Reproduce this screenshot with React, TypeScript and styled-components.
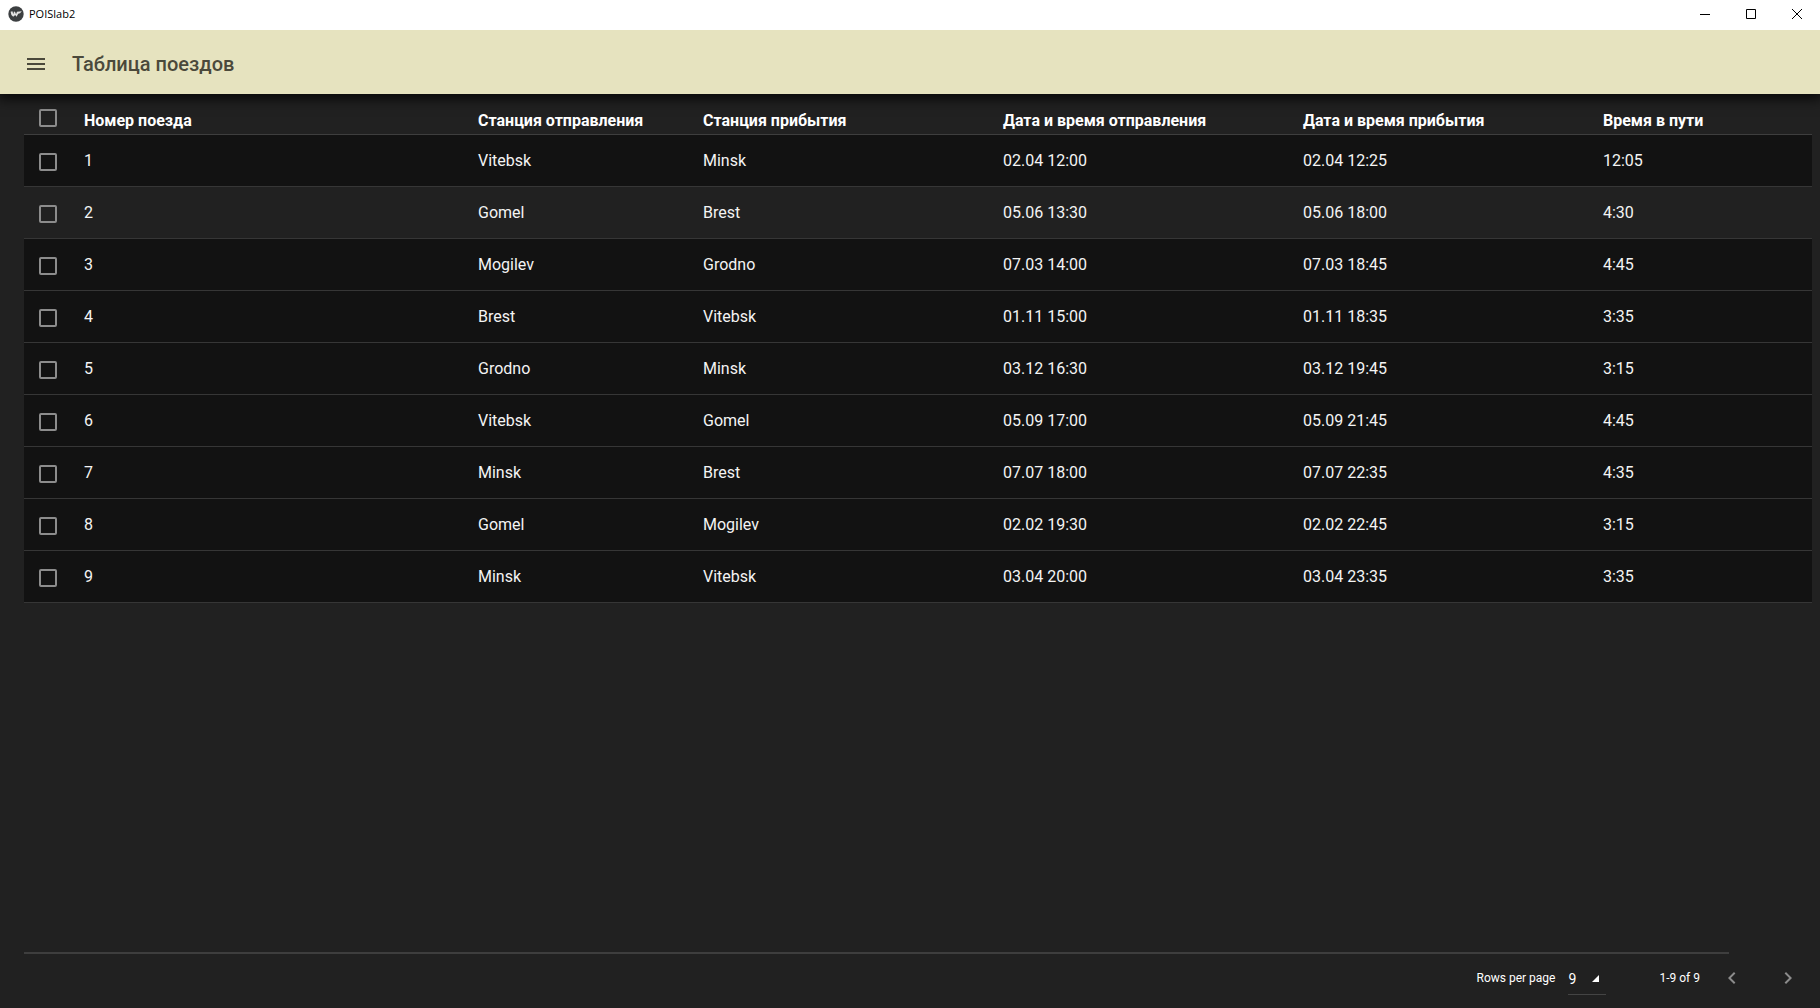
import React, { useState } from "react";
import styled, { createGlobalStyle } from "styled-components";

const GlobalStyle = createGlobalStyle`
  * { box-sizing: border-box; }
  body { margin: 0; background: #212121; }
  button, select, input { font: inherit; margin: 0; }
`;

const Window = styled.div`
  min-height: 100vh;
  display: flex;
  flex-direction: column;
  background: #212121;
  color: #fff;
  font-family: Roboto, "Liberation Sans", sans-serif;
  font-size: 16px;
`;

const TitleBar = styled.header`
  position: relative;
  z-index: 1;
  display: flex;
  align-items: center;
  height: 30px;
  padding: 0 0 2px 8px;
  background: #fff;
  color: #000;
`;

const WindowTitle = styled.span`
  flex: 1;
  margin-left: 5px;
  font-family: "Open Sans", "Noto Sans", sans-serif;
  font-size: 11px;
  line-height: 16px;
`;

const WindowButton = styled.button`
  display: flex;
  align-items: center;
  justify-content: center;
  width: 46px;
  height: 28px;
  padding: 0;
  border: 0;
  background: transparent;
  color: #000;
`;

const Toolbar = styled.div`
  position: relative;
  display: flex;
  align-items: center;
  gap: 24px;
  height: 64px;
  padding: 4px 24px 0;
  background: #e6e3bf;
  color: #4b493b;
  box-shadow: 0 3px 12px 2px rgba(0, 0, 0, 0.75);
`;

const IconButton = styled.button`
  display: flex;
  padding: 0;
  border: 0;
  background: transparent;
  color: inherit;
`;

const PageTitle = styled.h1`
  margin: 0;
  font-size: 20px;
  line-height: 24px;
  font-weight: 500;
`;

const Main = styled.main`
  flex: 1;
  padding: 0 8px 0 24px;
`;

const Table = styled.table`
  width: 100%;
  table-layout: fixed;
  border-collapse: separate;
  border-spacing: 0;
`;

const Col = styled.col<{ $width?: number }>`
  width: ${(p) => (p.$width ? `${p.$width}px` : "auto")};
`;

const HeadCell = styled.th`
  height: 41px;
  padding: 14px 0 0;
  border-bottom: 1px solid #3e3e3e;
  font-weight: 700;
  line-height: 20px;
  text-align: left;
`;

const HeadCheckCell = styled(HeadCell)`
  padding: 7px 0 0 15px;
`;

const Row = styled.tr<{ $highlighted: boolean }>`
  background: ${(p) => (p.$highlighted ? "#212121" : "#121212")};
`;

const Cell = styled.td`
  height: 52px;
  padding: 0;
  border-bottom: 1px solid #363636;
  color: #f4f4f4;
  line-height: 20px;
`;

const CheckCell = styled(Cell)`
  padding: 3px 0 0 15px;
`;

const Checkbox = styled.input.attrs({ type: "checkbox" })`
  appearance: none;
  display: block;
  width: 18px;
  height: 18px;
  border: 2px solid #8c8c8c;
  border-radius: 2px;
  &:checked { background: #e6e3bf; }
`;

const Footer = styled.footer`
  padding-left: 24px;
`;

const Rule = styled.hr`
  height: 2px;
  margin: 0 91px 0 0;
  border: 0;
  background: #3e3e3e;
`;

const Pagination = styled.div`
  display: flex;
  align-items: center;
  justify-content: flex-end;
  height: 54px;
  padding: 0 20px 6px 0;
  font-size: 12px;
  color: #fff;
`;

const SelectBox = styled.div`
  position: relative;
  margin: 2px 53px 0 13px;
`;

const PageSelect = styled.select`
  appearance: none;
  display: block;
  width: 38px;
  height: 32px;
  padding: 0;
  border: 0;
  border-bottom: 1px solid #444;
  border-radius: 0;
  background: transparent;
  color: #fff;
  font-size: 14px;
`;

const SelectArrow = styled.svg`
  position: absolute;
  right: 7px;
  top: 12px;
  pointer-events: none;
`;

const PageButtons = styled.div`
  display: flex;
  gap: 32px;
  margin-left: 20px;
  color: #8c8c8c;
`;

const headings = [
  "Номер поезда",
  "Станция отправления",
  "Станция прибытия",
  "Дата и время отправления",
  "Дата и время прибытия",
  "Время в пути",
];

const trains = [
  ["1", "Vitebsk", "Minsk", "02.04 12:00", "02.04 12:25", "12:05"],
  ["2", "Gomel", "Brest", "05.06 13:30", "05.06 18:00", "4:30"],
  ["3", "Mogilev", "Grodno", "07.03 14:00", "07.03 18:45", "4:45"],
  ["4", "Brest", "Vitebsk", "01.11 15:00", "01.11 18:35", "3:35"],
  ["5", "Grodno", "Minsk", "03.12 16:30", "03.12 19:45", "3:15"],
  ["6", "Vitebsk", "Gomel", "05.09 17:00", "05.09 21:45", "4:45"],
  ["7", "Minsk", "Brest", "07.07 18:00", "07.07 22:35", "4:35"],
  ["8", "Gomel", "Mogilev", "02.02 19:30", "02.02 22:45", "3:15"],
  ["9", "Minsk", "Vitebsk", "03.04 20:00", "03.04 23:35", "3:35"],
];

const Icon = ({ d }: { d: string }) => (
  <svg width="24" height="24" viewBox="0 0 24 24" fill="currentColor" aria-hidden="true">
    <path d={d} />
  </svg>
);

const Glyph = ({ d }: { d: string }) => (
  <svg width="10" height="10" viewBox="0 0 10 10" fill="none" stroke="currentColor" aria-hidden="true">
    <path d={d} />
  </svg>
);

const Logo = () => (
  <svg width="16" height="16" viewBox="0 0 16 16" aria-hidden="true">
    <circle cx="8" cy="8" r="7.7" fill="#3c3f41" />
    <path d="M2.6 5.8 4.4 5.2 5.4 8.2 6 5.2 7.4 6.6 8 8.2 9 5.8 13.8 5.2 12 7.2 10.2 7.8 8.6 10.8 7.2 9 5.2 10.8 3.4 9Z" fill="#e4e4e4" />
  </svg>
);

export default function App() {
  const [selected, setSelected] = useState<string[]>([]);
  const [highlighted, setHighlighted] = useState("2");

  const toggle = (id: string) =>
    setSelected((ids) => (ids.includes(id) ? ids.filter((i) => i !== id) : [...ids, id]));

  return (
    <Window>
      <GlobalStyle />
      <TitleBar>
        <Logo />
        <WindowTitle>POISlab2</WindowTitle>
        <WindowButton aria-label="Minimize"><Glyph d="M0 5.5H10" /></WindowButton>
        <WindowButton aria-label="Maximize"><Glyph d="M.5 .5H9.5V9.5H.5Z" /></WindowButton>
        <WindowButton aria-label="Close"><Glyph d="M0 0 10 10M10 0 0 10" /></WindowButton>
      </TitleBar>
      <Toolbar>
        <IconButton aria-label="Menu">
          <Icon d="M3 18h18v-2H3v2zm0-5h18v-2H3v2zm0-7v2h18V6H3z" />
        </IconButton>
        <PageTitle>Таблица поездов</PageTitle>
      </Toolbar>
      <Main>
        <Table>
          <colgroup>
            <Col $width={60} />
            <Col />
            <Col $width={225} />
            <Col $width={300} />
            <Col $width={300} />
            <Col $width={300} />
            <Col $width={209} />
          </colgroup>
          <thead>
            <tr>
              <HeadCheckCell>
                <Checkbox
                  aria-label="Select all"
                  checked={selected.length === trains.length}
                  onChange={(e) => setSelected(e.target.checked ? trains.map((t) => t[0]) : [])}
                />
              </HeadCheckCell>
              {headings.map((h) => (
                <HeadCell key={h} scope="col">{h}</HeadCell>
              ))}
            </tr>
          </thead>
          <tbody>
            {trains.map((train) => (
              <Row
                key={train[0]}
                $highlighted={highlighted === train[0]}
                onMouseEnter={() => setHighlighted(train[0])}
              >
                <CheckCell>
                  <Checkbox
                    aria-label={`Select ${train[0]}`}
                    checked={selected.includes(train[0])}
                    onChange={() => toggle(train[0])}
                  />
                </CheckCell>
                {train.map((value, i) => (
                  <Cell key={i}>{value}</Cell>
                ))}
              </Row>
            ))}
          </tbody>
        </Table>
      </Main>
      <Footer>
        <Rule />
        <Pagination>
          <label htmlFor="page-size">Rows per page</label>
          <SelectBox>
            <PageSelect id="page-size" defaultValue="9">
              <option>9</option>
            </PageSelect>
            <SelectArrow width="7" height="7" viewBox="0 0 7 7" fill="#fff" aria-hidden="true">
              <path d="M7 0V7H0Z" />
            </SelectArrow>
          </SelectBox>
          <span>1-9 of 9</span>
          <PageButtons>
            <IconButton aria-label="Previous page">
              <Icon d="M15.41 7.41 14 6l-6 6 6 6 1.41-1.41L10.83 12z" />
            </IconButton>
            <IconButton aria-label="Next page">
              <Icon d="M10 6 8.59 7.41 13.17 12l-4.58 4.59L10 18l6-6z" />
            </IconButton>
          </PageButtons>
        </Pagination>
      </Footer>
    </Window>
  );
}
